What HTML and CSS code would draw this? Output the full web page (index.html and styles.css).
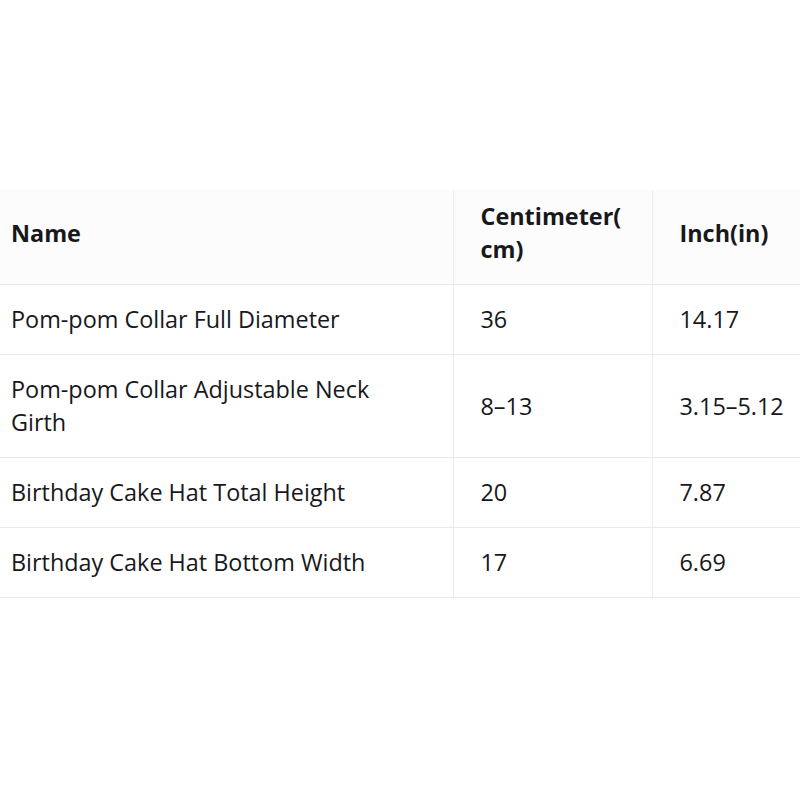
FILE: index.html
```html
<!DOCTYPE html>
<html>
<head>
<meta charset="utf-8">
<link rel="stylesheet" href="styles.css">
</head>
<body>
<div class="wrap">
<table class="spec">
  <colgroup>
    <col class="c1"><col class="c2"><col class="c3">
  </colgroup>
  <thead>
    <tr><th>Name</th><th>Centimeter(<br>cm)</th><th>Inch(in)</th></tr>
  </thead>
  <tbody>
    <tr><td>Pom-pom Collar Full Diameter</td><td>36</td><td>14.17</td></tr>
    <tr><td>Pom-pom Collar Adjustable Neck<br>Girth</td><td>8–13</td><td>3.15–5.12</td></tr>
    <tr><td>Birthday Cake Hat Total Height</td><td>20</td><td>7.87</td></tr>
    <tr><td>Birthday Cake Hat Bottom Width</td><td>17</td><td>6.69</td></tr>
  </tbody>
</table>
</div>
</body>
</html>
```
FILE: styles.css
```css
html, body {
  margin: 0;
  padding: 0;
  background: #ffffff;
}
.wrap {
  padding-top: 190px;
  width: 800px;
}
.spec {
  border-collapse: collapse;
  table-layout: fixed;
  width: 800px;
  font-family: "Open Sans", "Noto Sans", sans-serif;
  font-size: 23.4px;
  color: #18181c;
}
.c1 { width: 453px; }
.c2 { width: 199px; }
.c3 { width: 148px; }
.spec th, .spec td {
  text-align: left;
  vertical-align: middle;
  padding: 18px 0 18px 27px;
  line-height: 33px;
  border-bottom: 1px solid #e9e9e9;
  border-left: 1px solid #ececec;
  white-space: nowrap;
}
.spec th:first-child, .spec td:first-child {
  border-left: none;
  padding-left: 11px;
}
.spec th {
  background: #fcfcfc;
  font-weight: 700;
  padding-top: 10px;
  padding-bottom: 18px;
}
```
